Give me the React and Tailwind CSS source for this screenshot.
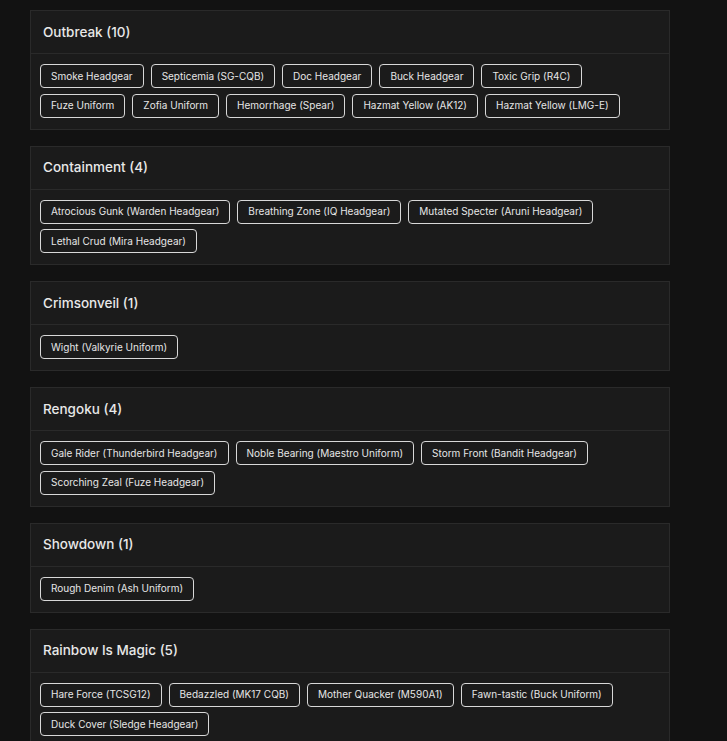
import React from "react";

const groups = [
  { name: "Outbreak", items: ["Smoke Headgear", "Septicemia (SG-CQB)", "Doc Headgear", "Buck Headgear", "Toxic Grip (R4C)", "Fuze Uniform", "Zofia Uniform", "Hemorrhage (Spear)", "Hazmat Yellow (AK12)", "Hazmat Yellow (LMG-E)"] },
  { name: "Containment", items: ["Atrocious Gunk (Warden Headgear)", "Breathing Zone (IQ Headgear)", "Mutated Specter (Aruni Headgear)", "Lethal Crud (Mira Headgear)"] },
  { name: "Crimsonveil", items: ["Wight (Valkyrie Uniform)"] },
  { name: "Rengoku", items: ["Gale Rider (Thunderbird Headgear)", "Noble Bearing (Maestro Uniform)", "Storm Front (Bandit Headgear)", "Scorching Zeal (Fuze Headgear)"] },
  { name: "Showdown", items: ["Rough Denim (Ash Uniform)"] },
  { name: "Rainbow Is Magic", items: ["Hare Force (TCSG12)", "Bedazzled (MK17 CQB)", "Mother Quacker (M590A1)", "Fawn-tastic (Buck Uniform)", "Duck Cover (Sledge Headgear)"] },
];

export default function App() {
  return (
    <div className="min-h-[741px] bg-[#121212] px-[30px] pt-[10px] pb-4" style={{ fontFamily: "Inter, 'Open Sans', sans-serif" }}>
      <div className="flex w-[640px] flex-col gap-[16px]">
        {groups.map((g) => (
          <div key={g.name} className="border border-[#2a2a2a] bg-[#1b1b1b]">
            <div className="flex h-[43px] items-center border-b border-[#2a2a2a] px-[12px] text-[13.5px] font-medium text-[#e8e8e8]">
              {g.name} ({g.items.length})
            </div>
            <div className="flex flex-wrap gap-x-[7px] gap-y-[5.5px] px-[9px] pt-[10px] pb-[11px]">
              {g.items.map((it) => (
                <div key={it} className="flex h-[24px] items-center rounded-[4px] border border-[#d8d8d8] px-[10px] text-[10px] text-[#e6e6e6]">
                  {it}
                </div>
              ))}
            </div>
          </div>
        ))}
      </div>
    </div>
  );
}
